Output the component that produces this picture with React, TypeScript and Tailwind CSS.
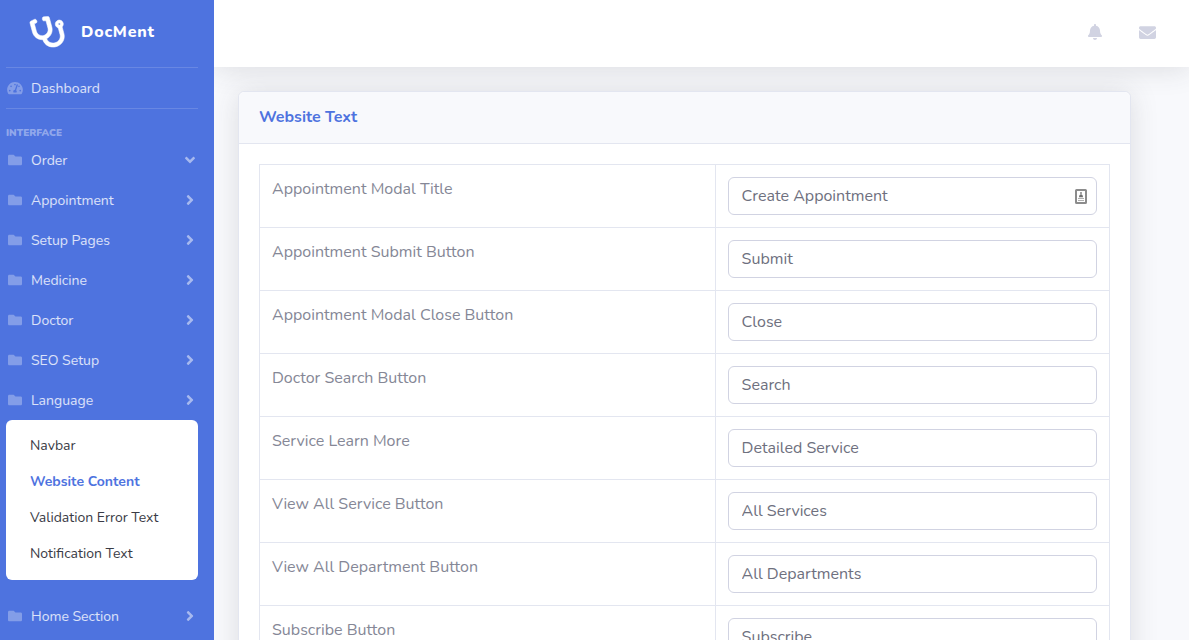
import React from "react";
import {
  FaAngleDown,
  FaAngleRight,
  FaBell,
  FaEnvelope,
  FaFolder,
  FaStethoscope,
  FaTachometerAlt,
} from "react-icons/fa";

const sections = ["Order", "Appointment", "Setup Pages", "Medicine", "Doctor", "SEO Setup", "Language"];

const languagePages = ["Navbar", "Website Content", "Validation Error Text", "Notification Text"];

const fields = [
  { id: "modal-title", label: "Appointment Modal Title", value: "Create Appointment" },
  { id: "submit-button", label: "Appointment Submit Button", value: "Submit" },
  { id: "close-button", label: "Appointment Modal Close Button", value: "Close" },
  { id: "doctor-search", label: "Doctor Search Button", value: "Search" },
  { id: "service-more", label: "Service Learn More", value: "Detailed Service" },
  { id: "all-services", label: "View All Service Button", value: "All Services" },
  { id: "all-departments", label: "View All Department Button", value: "All Departments" },
  { id: "subscribe", label: "Subscribe Button", value: "Subscribe" },
];

function SectionButton({ label, open = false }: { label: string; open?: boolean }) {
  return (
    <button type="button" className="flex h-10 w-full items-center text-left text-[14px] text-white/80">
      <span className="flex w-[17px] shrink-0 justify-center text-white/30">
        <FaFolder className="size-[14px]" />
      </span>
      <span className="ml-2 grow">{label}</span>
      <span className="flex w-4 shrink-0 justify-center text-white/50">
        {open ? <FaAngleDown className="size-4" /> : <FaAngleRight className="size-4" />}
      </span>
    </button>
  );
}

function Sidebar() {
  return (
    <aside className="relative z-10 w-[214px] shrink-0 bg-[#4e73df] pr-4 pl-1.5">
      <a href="#" className="flex h-[67px] items-center pb-1 pl-[27px] text-white">
        <FaStethoscope className="size-8 -rotate-15 overflow-visible stroke-current stroke-[8px]" />
        <span className="ml-4 text-[16px] font-extrabold tracking-wider">DocMent</span>
      </a>
      <hr className="border-t border-white/15" />
      <a href="#" className="flex h-10 items-center text-[14px] text-white/80">
        <span className="flex w-[17px] shrink-0 justify-center text-white/30">
          <FaTachometerAlt className="h-[14px] w-4" />
        </span>
        <span className="ml-2">Dashboard</span>
      </a>
      <hr className="border-t border-white/15" />
      <h2 className="pt-[17px] text-[10px] leading-[14px] font-black text-white/40 uppercase">Interface</h2>
      <nav>
        {sections.map((label) => (
          <SectionButton key={label} label={label} open={label === "Order"} />
        ))}
        <ul className="mb-4 rounded-md bg-white pt-[7px] pb-[9px]">
          {languagePages.map((label) => (
            <li key={label}>
              <a
                href="#"
                className={
                  label === "Website Content"
                    ? "flex h-9 items-center px-6 text-[14px] font-bold text-[#4e73df]"
                    : "flex h-9 items-center px-6 text-[14px] text-[#3a3b45]"
                }
              >
                {label}
              </a>
            </li>
          ))}
        </ul>
        <SectionButton label="Home Section" />
      </nav>
    </aside>
  );
}

function AutofillIcon() {
  return (
    <svg viewBox="0 0 12 15" className="h-[15px] w-3" aria-hidden="true">
      <rect x="1" y="1" width="10" height="13" rx="0.5" fill="#fff" stroke="#8c8c8c" strokeWidth="2" />
      <path d="M6 3v2" stroke="#8c8c8c" strokeWidth="1.6" />
      <path d="M4 8.2c0-4 4-4 4 0z" fill="#6f6f6f" />
      <path d="M3 9.5h6M3 11.5h6" stroke="#b0b0b0" strokeWidth="1" />
    </svg>
  );
}

export default function App() {
  return (
    <div className="flex min-h-screen bg-[#f8f9fc] font-[Nunito,Lato,sans-serif]">
      <Sidebar />
      <div className="min-w-0 grow overflow-x-hidden">
        <header className="flex h-[67px] items-center justify-end gap-8 bg-white pr-8 pb-[3px] shadow-[0_2px_28px_0_rgba(58,59,69,0.15)]">
          <button type="button" aria-label="Alerts" className="flex w-5 justify-center text-[#d1d3e2]">
            <FaBell className="size-4" />
          </button>
          <button type="button" aria-label="Messages" className="flex w-5 justify-center text-[#d1d3e2]">
            <FaEnvelope className="size-[17px]" />
          </button>
        </header>
        <main className="pt-6 pr-[58px] pb-6 pl-6">
          <section className="relative rounded-md border border-[#e3e6f0] bg-white shadow-[0_2px_28px_0_rgba(58,59,69,0.15)]">
            <h1 className="rounded-t-md border-b border-[#e3e6f0] bg-[#f8f9fc] px-5 py-4 text-[16px] leading-[19px] font-bold text-[#4e73df]">
              Website Text
            </h1>
            <div className="p-5">
              <table className="w-full table-fixed border-collapse text-[16px] leading-6 text-[#858796]">
                <colgroup>
                  <col className="w-[53.6%]" />
                  <col />
                </colgroup>
                <tbody>
                  {fields.map((field) => (
                    <tr key={field.id}>
                      <td className="border border-[#e3e6f0] p-3 align-top">
                        <label htmlFor={field.id}>{field.label}</label>
                      </td>
                      <td className="border border-[#e3e6f0] p-3 align-top">
                        <div className="relative">
                          <input
                            id={field.id}
                            type="text"
                            defaultValue={field.value}
                            className="block h-[38px] w-full rounded-md border border-[#d1d3e2] bg-white px-[13px] text-[#6e707e] outline-none"
                          />
                          {field.id === "modal-title" && (
                            <span className="absolute inset-y-0 right-2.5 flex items-center">
                              <AutofillIcon />
                            </span>
                          )}
                        </div>
                      </td>
                    </tr>
                  ))}
                </tbody>
              </table>
            </div>
          </section>
        </main>
      </div>
    </div>
  );
}
